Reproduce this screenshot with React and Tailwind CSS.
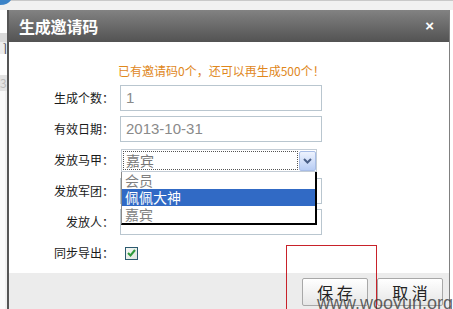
import { useState } from 'react'

const ROWS = [
  { label: '生成个数：', value: '1' },
  { label: '有效日期：', value: '2013-10-31' },
]

const OPTIONS = ['会员', '佩佩大神', '嘉宾']

function Label({ children }) {
  return <div className="w-[105px] text-right text-[12px] leading-[14px] text-[#1a1a1a]">{children}</div>
}

function TextBox({ value }) {
  return (
    <div className="w-[202px] h-[26px] border border-[#b9c6cf] bg-white flex items-center pl-[5px] text-[15px] text-[#8a8a8a] font-['Liberation_Sans',sans-serif]">
      {value}
    </div>
  )
}

function Row({ label, children }) {
  return (
    <div className="h-[26px] flex items-center gap-[6px]">
      <Label>{label}</Label>
      {children}
    </div>
  )
}

function Select() {
  const [sel] = useState(1)
  return (
    <div className="relative ml-[1px] w-[196px] h-[23px] border border-[#c3ccd5] flex">
      <div className="flex-1 m-[1px] border border-dotted border-[#555] flex items-center pl-[2px] text-[14px] text-[#777]">
        嘉宾
      </div>
      <div className="w-[17px] h-[20px] mt-[1px] mr-[0px] border border-[#a8bde6] rounded-[2px] bg-gradient-to-b from-[#eef3fe] to-[#b8cdf4] flex items-center justify-center">
        <svg width="9" height="6" viewBox="0 0 9 6">
          <path d="M1 1 L4.5 4.5 L8 1" fill="none" stroke="#4a5f86" strokeWidth="2" />
        </svg>
      </div>
      <div className="absolute left-[-1px] top-[22px] w-[196px] bg-white border-l border-[#8a8a8a] border-r-2 border-b-2 border-r-black border-b-black z-10">
        {OPTIONS.map((o, i) => (
          <div
            key={o}
            className={`h-[17px] leading-[17px] pl-[3px] text-[14px] ${i === sel ? 'bg-[#316ac5] text-white' : 'text-[#808080]'}`}
          >
            {o}
          </div>
        ))}
      </div>
    </div>
  )
}

function Button({ children }) {
  return (
    <button className="w-[66px] h-[28px] border border-[#a8a8a8] rounded-[2px] bg-gradient-to-b from-white to-[#e6e6e6] text-[16px] text-[#222] leading-none">
      {children}
    </button>
  )
}

export default function App() {
  return (
    <div className="relative w-[453px] h-[309px] overflow-hidden bg-white font-['Noto_Sans_CJK_SC',sans-serif]">
      {/* page behind the dialog */}
      <div className="h-[10px] bg-[#f1f1f1] border-t border-[#c9c9c9] relative">
        <svg className="absolute left-0 top-[-1px]" width="12" height="6" viewBox="0 0 12 6">
          <path d="M0 0 H11 Q8 5 0 5 Z" fill="#3b83c7" />
        </svg>
      </div>
      <div className="flex">
        <div className="w-[7px] flex flex-col">
          <div className="h-[23px] bg-white" />
          <div className="h-[9px] bg-[#d9d9d9]" />
          <div className="h-[12px] bg-[#ededed] overflow-hidden text-[12px] leading-[12px] text-[#333] flex justify-end">]</div>
          <div className="h-[21px] bg-white" />
          <div className="h-[16px] bg-[#e3e3e3] text-[12px] leading-[16px] text-[#bbb] overflow-hidden">3</div>
          <div className="flex-1 bg-[#fafafa] border-r-2 border-[#f0f0f0]" />
        </div>

        {/* dialog */}
        <div className="w-[443px] h-[299px] border-l-2 border-[#555] border-r border-r-[#808080] flex flex-col">
          <div className="h-[32px] shrink-0 bg-gradient-to-b from-[#828282] to-[#535353] flex items-center justify-between pl-[10px] pr-[15px]">
            <span className="text-[16px] font-bold text-white tracking-[-0.2px]">生成邀请码</span>
            <span className="text-[15px] font-bold text-white font-['Liberation_Sans',sans-serif]">×</span>
          </div>

          <div className="h-[231px] shrink-0 bg-white pt-[21px]">
            <div className="pl-[109px] text-[12px] leading-[16px] text-[#e0871c] h-[16px]">
              已有邀请码0个，还可以再生成500个！
            </div>
            <div className="mt-[6px] flex flex-col gap-[5px]">
              {ROWS.map(r => (
                <Row key={r.label} label={r.label}>
                  <TextBox value={r.value} />
                </Row>
              ))}
              <Row label="发放马甲：">
                <Select />
              </Row>
              <Row label="发放军团：">
                <TextBox value="" />
              </Row>
              <Row label="发放人：">
                <TextBox value="" />
              </Row>
              <Row label="同步导出：">
                <div className="ml-[5px] w-[13px] h-[13px] border border-[#2c5a6f] bg-gradient-to-br from-[#f4f7f4] to-[#dfe6df] flex items-center justify-center">
                  <svg width="9" height="8" viewBox="0 0 9 8">
                    <path d="M1 4 L3.5 6.5 L8 1" fill="none" stroke="#2e9a3a" strokeWidth="2" />
                  </svg>
                </div>
              </Row>
            </div>
          </div>

          <div className="flex-1 bg-[#ececec] flex justify-end items-start pt-[5px] pr-[6px] gap-[9px]">
            <Button>保 存</Button>
            <Button>取 消</Button>
          </div>
        </div>
        <div className="flex-1 bg-white" />
      </div>

      {/* annotation and watermark */}
      <div className="absolute left-[286px] top-[245px] w-[91px] h-[70px] border border-[#c8222a]" />
      <div className="absolute right-[0px] bottom-[-5px] text-[18px] leading-[21px] text-[#3c3c3c]/80 font-['Liberation_Sans',sans-serif]">
        www.wooyun.org
      </div>
    </div>
  )
}
